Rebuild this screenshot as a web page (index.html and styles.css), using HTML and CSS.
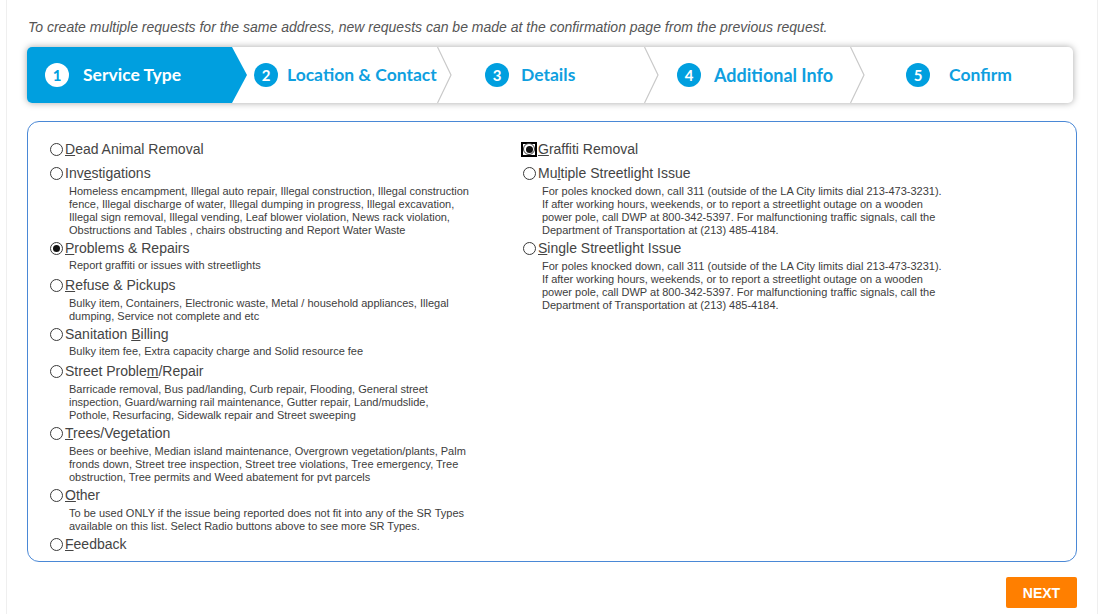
FILE: index.html
```html
<!DOCTYPE html>
<html lang="en">
<head>
<meta charset="utf-8">
<title>Service Request - Service Type</title>
<link rel="stylesheet" href="styles.css">
</head>
<body>
<div class="page">
  <p class="note">To create multiple requests for the same address, new requests can be made at the confirmation page from the previous request.</p>

  <nav class="wizard">
    <div class="step step-1 active"><span class="num">1</span><span class="step-name">Service Type</span></div>
    <svg class="chev" viewBox="0 0 15 56" width="15" height="56"><polygon points="0,0 15,28 0,56" fill="#009fdf"/></svg>
    <div class="step step-2"><span class="num">2</span><span class="step-name">Location &amp; Contact</span></div>
    <svg class="chev" viewBox="0 0 15 56" width="15" height="56"><polyline points="0.5,0 14,28 0.5,56" fill="none" stroke="#c9c9c9" stroke-width="1.2"/></svg>
    <div class="step step-3"><span class="num">3</span><span class="step-name">Details</span></div>
    <svg class="chev" viewBox="0 0 15 56" width="15" height="56"><polyline points="0.5,0 14,28 0.5,56" fill="none" stroke="#c9c9c9" stroke-width="1.2"/></svg>
    <div class="step step-4"><span class="num">4</span><span class="step-name">Additional Info</span></div>
    <svg class="chev" viewBox="0 0 15 56" width="15" height="56"><polyline points="0.5,0 14,28 0.5,56" fill="none" stroke="#c9c9c9" stroke-width="1.2"/></svg>
    <div class="step step-5"><span class="num">5</span><span class="step-name">Confirm</span></div>
  </nav>

  <section class="panel">
    <div class="col">
      <div class="opt">
        <label class="opt-label"><span class="radio"></span><span><u>D</u>ead Animal Removal</span></label>
      </div>
      <div class="opt">
        <label class="opt-label"><span class="radio"></span><span>Inv<u>e</u>stigations</span></label>
        <p class="desc">Homeless encampment, Illegal auto repair, Illegal construction, Illegal construction fence, Illegal discharge of water, Illegal dumping in progress, Illegal excavation, Illegal sign removal, Illegal vending, Leaf blower violation, News rack violation, Obstructions and Tables , chairs obstructing and Report Water Waste</p>
      </div>
      <div class="opt">
        <label class="opt-label"><span class="radio checked"></span><span><u>P</u>roblems &amp; Repairs</span></label>
        <p class="desc desc-single">Report graffiti or issues with streetlights</p>
      </div>
      <div class="opt">
        <label class="opt-label"><span class="radio"></span><span><u>R</u>efuse &amp; Pickups</span></label>
        <p class="desc">Bulky item, Containers, Electronic waste, Metal / household appliances, Illegal dumping, Service not complete and etc</p>
      </div>
      <div class="opt">
        <label class="opt-label"><span class="radio"></span><span>Sanitation <u>B</u>illing</span></label>
        <p class="desc desc-single">Bulky item fee, Extra capacity charge and Solid resource fee</p>
      </div>
      <div class="opt">
        <label class="opt-label"><span class="radio"></span><span>Street Proble<u>m</u>/Repair</span></label>
        <p class="desc">Barricade removal, Bus pad/landing, Curb repair, Flooding, General street inspection, Guard/warning rail maintenance, Gutter repair, Land/mudslide, Pothole, Resurfacing, Sidewalk repair and Street sweeping</p>
      </div>
      <div class="opt">
        <label class="opt-label"><span class="radio"></span><span><u>T</u>rees/Vegetation</span></label>
        <p class="desc">Bees or beehive, Median island maintenance, Overgrown vegetation/plants, Palm fronds down, Street tree inspection, Street tree violations, Tree emergency, Tree obstruction, Tree permits and Weed abatement for pvt parcels</p>
      </div>
      <div class="opt">
        <label class="opt-label"><span class="radio"></span><span><u>O</u>ther</span></label>
        <p class="desc">To be used ONLY if the issue being reported does not fit into any of the SR Types available on this list. Select Radio buttons above to see more SR Types.</p>
      </div>
      <div class="opt">
        <label class="opt-label"><span class="radio"></span><span><u>F</u>eedback</span></label>
      </div>
    </div>

    <div class="col">
      <div class="opt">
        <label class="opt-label"><span class="focus-box"><span class="radio checked"></span></span><span><u>G</u>raffiti Removal</span></label>
      </div>
      <div class="opt">
        <label class="opt-label"><span class="radio"></span><span>Mu<u>l</u>tiple Streetlight Issue</span></label>
        <p class="desc">For poles knocked down, call 311 (outside of the LA City limits dial 213-473-3231). If after working hours, weekends, or to report a streetlight outage on a wooden power pole, call DWP at 800-342-5397. For malfunctioning traffic signals, call the Department of Transportation at (213) 485-4184.</p>
      </div>
      <div class="opt">
        <label class="opt-label"><span class="radio"></span><span><u>S</u>ingle Streetlight Issue</span></label>
        <p class="desc">For poles knocked down, call 311 (outside of the LA City limits dial 213-473-3231). If after working hours, weekends, or to report a streetlight outage on a wooden power pole, call DWP at 800-342-5397. For malfunctioning traffic signals, call the Department of Transportation at (213) 485-4184.</p>
      </div>
    </div>
  </section>

  <div class="actions">
    <button class="next-btn" type="button">NEXT</button>
  </div>
</div>
</body>
</html>
```

FILE: styles.css
```css
html, body {
  margin: 0;
  padding: 0;
  background: #ffffff;
}

body {
  font-family: "Liberation Sans", Arial, sans-serif;
  color: #444444;
}

.page {
  box-sizing: border-box;
  width: 1092px;
  min-height: 614px;
  margin-left: 6px;
  padding: 19px 20px 0 20px;
  border-left: 1px solid #efefef;
  border-right: 1px solid #efefef;
}

.note {
  margin: 0;
  font-size: 14px;
  line-height: 16px;
  font-style: italic;
  color: #555555;
  padding-left: 1px;
}

/* Wizard */
.wizard {
  display: flex;
  height: 56px;
  margin: 12px 4px 0 0;
  background: #ffffff;
  border-radius: 5px;
  box-shadow: 0 0 7px rgba(0, 0, 0, 0.35);
  font-family: Lato, "Open Sans", sans-serif;
}

.chev {
  flex: 0 0 15px;
  display: block;
}

.step {
  display: flex;
  align-items: center;
  box-sizing: border-box;
  height: 56px;
  padding-bottom: 1px;
  color: #0f9fdf;
}

.step.active {
  background: #009fdf;
  color: #ffffff;
  border-radius: 5px 0 0 5px;
}

.step-1 { width: 205px; padding-left: 18px; gap: 14px; }
.step-2 { width: 190px; padding-left: 7px; gap: 9px; }
.step-3 { width: 192px; padding-left: 33px; gap: 12px; }
.step-4 { width: 191px; padding-left: 18px; gap: 13px; }
.step-5 { flex: 1; padding-left: 41px; gap: 19px; }

.num {
  display: flex;
  align-items: center;
  justify-content: center;
  width: 24px;
  height: 24px;
  border-radius: 50%;
  background: #009fdf;
  color: #ffffff;
  font-size: 15px;
  font-weight: 700;
}

.step.active .num {
  background: #ffffff;
  color: #009fdf;
}

.step-name {
  font-size: 17.5px;
  font-weight: 700;
  white-space: nowrap;
}

.step-4 .step-name {
  font-size: 18px;
}

/* Panel */
.panel {
  display: grid;
  grid-template-columns: 473px 1fr;
  margin-top: 18px;
  padding: 16px 0 4px 22px;
  border: 1px solid #4a88d6;
  border-radius: 12px;
}

.opt {
  margin-bottom: 2px;
}

.opt-label {
  display: flex;
  align-items: center;
  height: 22px;
  font-size: 14px;
  color: #444444;
  white-space: nowrap;
}

.radio {
  box-sizing: border-box;
  flex: 0 0 13px;
  width: 13px;
  height: 13px;
  margin-right: 2px;
  border: 1px solid #3a3a3a;
  border-radius: 50%;
  display: flex;
  align-items: center;
  justify-content: center;
  background: #fff;
}

.radio.checked::after {
  content: "";
  width: 7px;
  height: 7px;
  border-radius: 50%;
  background: #111111;
}

.focus-box {
  box-sizing: border-box;
  display: flex;
  align-items: center;
  justify-content: center;
  width: 16px;
  height: 15px;
  margin-left: -2px;
  margin-right: 1px;
  border: 2px solid #000000;
}

.focus-box .radio {
  margin-right: 0;
  flex-basis: 12px;
  width: 12px;
  height: 12px;
}

.desc {
  width: 401px;
  margin: 1px 0 -2px 19px;
  font-size: 11px;
  line-height: 13px;
  color: #3d3d3d;
}

.desc-single {
  margin-top: 0;
  margin-bottom: 0;
}

/* Actions */
.actions {
  display: flex;
  justify-content: flex-end;
  margin-top: 15px;
}

.next-btn {
  width: 71px;
  height: 31px;
  border: none;
  border-radius: 2px;
  background: #ff7f00;
  color: #ffffff;
  font-family: "Liberation Sans", Arial, sans-serif;
  font-size: 14px;
  font-weight: 700;
  padding: 0;
}
```
